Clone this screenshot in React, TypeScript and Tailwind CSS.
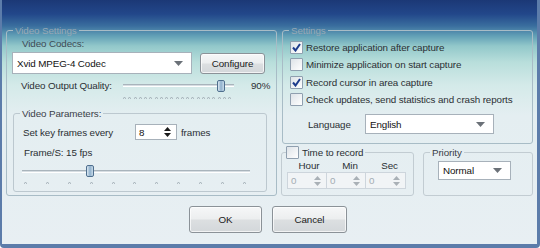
/** @format */

/* ============================== */
/* small drawn parts              */
/* ============================== */

function ArrowDown({ color = "#6b7178" }: { color?: string }) {
  return (
    <svg width="9" height="5" viewBox="0 0 9 5">
      <path d="M0 0 L9 0 L4.5 5 Z" fill={color} />
    </svg>
  );
}

function SpinArrows({ color = "#1a1a1a" }: { color?: string }) {
  return (
    <svg width="7" height="12" viewBox="0 0 7 12">
      <path d="M0 5 L7 5 L3.5 1 Z" fill={color} />
      <path d="M0 7 L7 7 L3.5 11 Z" fill={color} />
    </svg>
  );
}

function Check({ checked }: { checked?: boolean }) {
  return (
    <span className="w-[13px] h-[13px] shrink-0 border border-[#8f9faf] rounded-[1px] bg-[linear-gradient(135deg,#dde3e8,#ffffff)] flex items-center justify-center">
      {checked && (
        <svg width="9" height="9" viewBox="0 0 9 9">
          <path d="M1 4.5 L3.5 7.5 L8 1" stroke="#1e3c8c" strokeWidth="2" fill="none" />
        </svg>
      )}
    </span>
  );
}

function Ticks({ count, width }: { count: number; width: number }) {
  return (
    <div className="flex justify-between" style={{ width }}>
      {Array.from({ length: count }).map((_, i) => (
        <svg key={i} width="3" height="2" viewBox="0 0 3 2">
          <path d="M0 2 L1.5 0 L3 2" stroke="#9aa6ae" strokeWidth="0.8" fill="none" />
        </svg>
      ))}
    </div>
  );
}

function Slider({ width, pos }: { width: number; pos: number }) {
  return (
    <div className="relative h-[12px] flex items-center" style={{ width }}>
      <div className="w-full h-[3px] border-t border-[#a9b4bc] border-b border-b-white bg-[#d6dde2]" />
      <div
        className="absolute top-0 w-[8px] h-[12px] rounded-[2px] border border-[#4f6f8e] bg-[linear-gradient(90deg,#dbe8f2,#8fb0cc_50%,#c8dbe9)]"
        style={{ left: pos }}
      />
    </div>
  );
}

function Combo({ text, className }: { text: string; className: string }) {
  return (
    <div className={`flex items-center justify-between bg-white border border-[#a7b1ba] pl-[4px] pr-[8px] ${className}`}>
      <span className="text-[#111]">{text}</span>
      <ArrowDown />
    </div>
  );
}

function Spin({ value, disabled, className }: { value: string; disabled?: boolean; className: string }) {
  return (
    <div
      className={`flex items-center justify-between pl-[3px] pr-[5px] border ${
        disabled ? "bg-[#f1f4f6] border-[#cdd5dc] text-[#a4adb4]" : "bg-white border-[#a7b1ba] text-[#111]"
      } ${className}`}
    >
      <span>{value}</span>
      <SpinArrows color={disabled ? "#a9b0b6" : "#1a1a1a"} />
    </div>
  );
}

function Button({ label, className }: { label: string; className: string }) {
  return (
    <button
      className={`flex items-center justify-center rounded-[3px] border border-[#8b9298] text-[#1a1a1a] bg-[linear-gradient(180deg,#f6f7f8,#eceeef_48%,#dcdfe1_52%,#d3d7da)] shadow-[inset_0_0_0_1px_rgba(255,255,255,0.7)] ${className}`}
    >
      {label}
    </button>
  );
}

const settings: [string, boolean][] = [
  ["Restore application after capture", true],
  ["Minimize application on start capture", false],
  ["Record cursor in area capture", true],
  ["Check updates, send statistics and crash reports", false],
];

/* ============================== */
/* 🧩 COMPONENT                   */
/* ============================== */

export default function App() {
  return (
    <div
      className="w-[540px] h-[248px] overflow-hidden whitespace-nowrap border-l-2 border-r-[3px] border-b-[4px] border-[#5c7caa] rounded-b-[4px] font-['Liberation_Sans',Arial,sans-serif] text-[9.8px] tracking-[-0.1px] leading-[13px] text-[#2b2f33] bg-[linear-gradient(180deg,#1b3876_0px,#22478a_14px,#3a6e9e_26px,#62a0b6_36px,#92c8ca_46px,#b8dedb_62px,#d4eae9_85px,#e4eef1_115px,#e8eff3_248px)]"
    >
      <div className="flex pt-[24px] pl-[4px] gap-[4px]">
        {/* 🔹 LEFT: VIDEO SETTINGS */}
        <fieldset className="w-[271px] h-[172px] border border-[#a8bcc6] rounded-[3px]">
          <legend className="ml-[6px] px-[2px] text-[#97a9b5]">Video Settings</legend>

          <div className="pl-[15px] text-[#3d4b55]">Video Codecs:</div>

          <div className="flex items-center mt-[2px] pl-[5px]">
            <Combo text="Xvid MPEG-4 Codec" className="w-[180px] h-[22px]" />
            <Button
              label="Configure"
              className="ml-[8px] w-[65px] h-[21px] border-[#5b86aa] bg-[linear-gradient(180deg,#eaf3fa,#dbe9f4_48%,#c9dceb_52%,#bcd3e6)]"
            />
          </div>

          <div className="flex items-center mt-[5px] pl-[14px]">
            <span className="w-[102px]">Video Output Quality:</span>
            <Slider width={111} pos={94} />
            <span className="ml-[17px]">90%</span>
          </div>
          <div className="pl-[116px] mt-[5px]">
            <Ticks count={21} width={108} />
          </div>

          {/* 🔹 VIDEO PARAMETERS */}
          <fieldset className="mt-[8px] ml-[6px] w-[254px] h-[85px] border border-[#bcc8cf] rounded-[3px]">
            <legend className="ml-[6px] px-[2px] text-[#3a4148]">Video Parameters:</legend>
            <div className="flex items-center pl-[9px] mt-[4px]">
              <span className="w-[112px]">Set key frames every</span>
              <Spin value="8" className="w-[42px] h-[16px]" />
              <span className="ml-[4px]">frames</span>
            </div>
            <div className="mt-[6px] pl-[10px]">Frame/S: 15 fps</div>
            <div className="mt-[6px] pl-[8px]">
              <Slider width={228} pos={64} />
            </div>
            <div className="mt-[5px] pl-[10px]">
              <Ticks count={11} width={222} />
            </div>
          </fieldset>
        </fieldset>

        {/* 🔹 RIGHT */}
        <div className="w-[252px] flex flex-col">
          <fieldset className="ml-[1px] w-[251px] h-[120px] border border-[#a8bcc6] rounded-[3px]">
            <legend className="ml-[6px] px-[2px] text-[#97a9b5]">Settings</legend>
            <div className="flex flex-col mt-[2px] pl-[7px]">
              {settings.map(([label, checked]) => (
                <div key={label} className="flex items-center h-[17.3px] gap-[3px]">
                  <Check checked={checked} />
                  <span>{label}</span>
                </div>
              ))}
            </div>
            <div className="flex items-center mt-[6px] pl-[25px]">
              <span className="w-[57px]">Language</span>
              <Combo text="English" className="w-[129px] h-[20px]" />
            </div>
          </fieldset>

          <div className="flex mt-[2px] gap-[9px]">
            {/* 🔹 TIME TO RECORD */}
            <fieldset className="w-[133px] h-[50px] border border-[#c2ccd2] rounded-[3px]">
              <legend className="flex items-center gap-[3px] ml-[4px] pr-[2px]">
                <Check />
                <span>Time to record</span>
              </legend>
              <div className="flex text-center pl-[5px]">
                <span className="w-[40px] pl-[4px]">Hour</span>
                <span className="w-[40px] pl-[6px]">Min</span>
                <span className="w-[40px] pl-[5px]">Sec</span>
              </div>
              <div className="flex pl-[5px]">
                <Spin value="0" disabled className="w-[40px] h-[17px]" />
                <Spin value="0" disabled className="w-[40px] h-[17px] -ml-px" />
                <Spin value="0" disabled className="w-[41px] h-[17px] -ml-px" />
              </div>
            </fieldset>

            {/* 🔹 PRIORITY */}
            <fieldset className="w-[110px] h-[50px] border border-[#c2ccd2] rounded-[3px]">
              <legend className="ml-[6px] px-[2px] text-[#3a4148]">Priority</legend>
              <div className="pl-[14px] mt-[2px]">
                <Combo text="Normal" className="w-[73px] h-[19px]" />
              </div>
            </fieldset>
          </div>
        </div>
      </div>

      {/* 🔹 BUTTONS */}
      <div className="flex mt-[10px] pl-[187px] gap-[10px]">
        <Button label="OK" className="w-[73px] h-[27px]" />
        <Button label="Cancel" className="w-[75px] h-[27px]" />
      </div>
    </div>
  );
}
